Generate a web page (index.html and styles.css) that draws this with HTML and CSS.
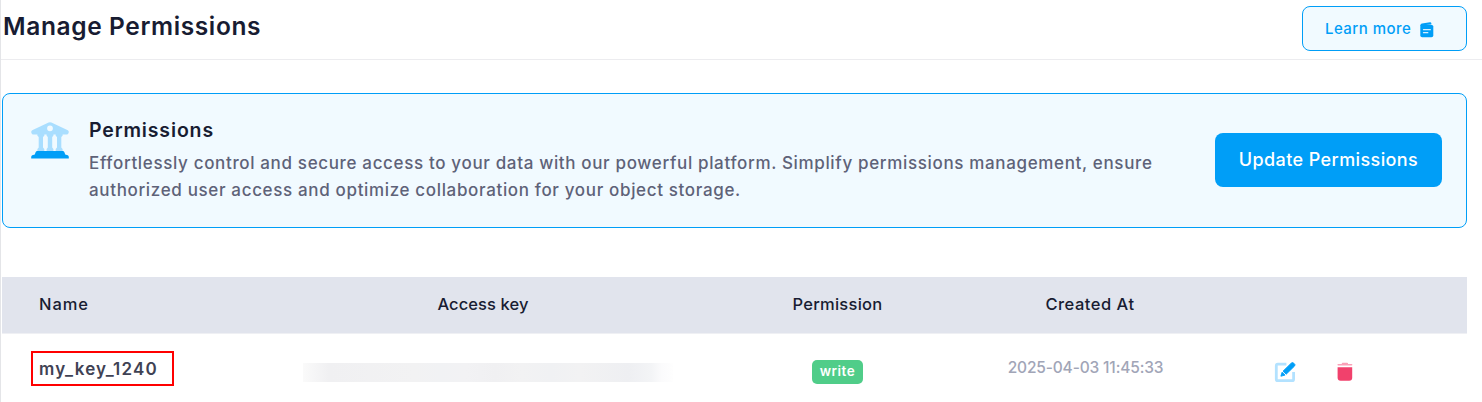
FILE: index.html
```
<!DOCTYPE html>
<html lang="en">
<head>
<meta charset="utf-8">
<title>Manage Permissions</title>
<link rel="stylesheet" href="styles.css">
</head>
<body>
<main class="page">
  <header class="topbar">
    <h1 class="title">Manage Permissions</h1>
    <a class="learn">
      <span>Learn more</span>
      <svg width="14" height="16" viewBox="0 0 14 16">
        <path d="M0.4 3.4 Q0.4 1.6 2 1.4 L10 0.2 Q11.2 0.1 11.4 1.4 V2.6 Z" fill="#009ef7"/>
        <path d="M0.3 3 H11.8 Q13.3 3 13.3 4.5 V13.5 Q13.3 15.3 11.5 15.3 H2.2 Q0.3 15.3 0.3 13.5 Z" fill="#009ef7"/>
        <path d="M3.5 7.7 H10.3 M3.5 10.7 H7.8" stroke="#d5efff" stroke-width="1.3" stroke-linecap="round"/>
      </svg>
    </a>
  </header>

  <section class="notice">
    <svg class="bank" width="38" height="38" viewBox="0 0 38 38">
      <path fill="#a9deff" fill-rule="evenodd" d="M17.6 0.5 Q19 -0.1 20.4 0.5 L36.8 8.2 Q38 8.8 37.7 10.4 Q37.3 12.4 36 12.4 H2 Q0.7 12.4 0.3 10.4 Q0 8.8 1.2 8.2 Z M19 3.4 A2.9 2.9 0 1 0 19 9.2 A2.9 2.9 0 1 0 19 3.4 Z"/>
      <g fill="#a9deff">
        <path d="M6.4 12 H13.3 V13.8 L12 15 V25.6 L13.3 27 V30 H6.4 V27 L7.7 25.6 V15 L6.4 13.8 Z"/>
        <path d="M15.6 12 H22.4 V13.8 L21.2 15 V25.6 L22.4 27 V30 H15.6 V27 L16.8 25.6 V15 L15.6 13.8 Z"/>
        <path d="M24.7 12 H31.6 V13.8 L30.3 15 V25.6 L31.6 27 V30 H24.7 V27 L26 25.6 V15 L24.7 13.8 Z"/>
      </g>
      <path fill="#009ef7" d="M6 29 H32 Q33.2 29 33.5 30.5 L34.2 32.4 L36.8 33.2 Q37.8 33.7 37.8 35 V36.5 H0.2 V35 Q0.2 33.7 1.2 33.2 L3.8 32.4 L4.5 30.5 Q4.8 29 6 29 Z"/>
    </svg>
    <div class="notice-body">
      <h2 class="notice-title">Permissions</h2>
      <p class="notice-text">Effortlessly control and secure access to your data with our powerful platform. Simplify permissions management, ensure<br>authorized user access and optimize collaboration for your object storage.</p>
    </div>
    <button class="update">Update Permissions</button>
  </section>

  <section class="table">
    <div class="row head">
      <span class="h-name">Name</span>
      <span class="mid h-access">Access key</span>
      <span class="mid h-perm">Permission</span>
      <span class="mid h-created">Created At</span>
    </div>
    <div class="row item">
      <span class="key">my_key_1240</span>
      <span class="mid masked-cell"><span class="masked"></span></span>
      <span class="mid"><span class="badge">write</span></span>
      <span class="mid date">2025-04-03 11:45:33</span>
      <span class="actions">
        <svg width="22" height="22" viewBox="0 0 22 22">
          <path d="M12.4 3.2 H3.8 Q2.3 3.2 2.3 4.7 V18.2 Q2.3 19.7 3.8 19.7 H18.1 Q19.6 19.7 19.6 18.2 V11" fill="none" stroke="#b3e2ff" stroke-width="2.8"/>
          <path d="M6.9 15.2 L8.1 11.2 L11 14.1 Z M9 10.2 L17.2 2.2 Q18.4 1 19.8 2.2 Q21.8 3.8 20.6 5 L12.2 13.2 Z" fill="#009ef7" stroke="#009ef7" stroke-width="0.9" stroke-linejoin="round"/>
        </svg>
        <svg width="16" height="20" viewBox="0 0 16 20">
          <path d="M1.2 2 H4.8 V1.6 Q4.8 0.8 5.6 0.8 H10.2 Q11 0.8 11 1.6 V2 H14.6 Q15.4 2 15.4 2.8 Q15.4 3.6 14.6 3.6 H1.2 Q0.4 3.6 0.4 2.8 Q0.4 2 1.2 2 Z" fill="#faa0b7"/>
          <path d="M0.6 5.2 H15.2 V15.8 Q15.2 18.8 12.2 18.8 H3.6 Q0.6 18.8 0.6 15.8 Z" fill="#f1416c"/>
        </svg>
      </span>
    </div>
  </section>
</main>
</body>
</html>
```
FILE: styles.css
```
* { box-sizing: border-box; }
body {
  margin: 0;
  background: #fff;
  font-family: Inter, "Open Sans", sans-serif;
  font-weight: 500;
  color: #181c32;
  overflow: hidden;
}
h1, h2, p { margin: 0; }
svg { display: block; flex: none; }
.page { height: 402px; border-left: 1px solid #e4e5e8; }
.topbar {
  display: flex;
  justify-content: space-between;
  align-items: flex-start;
  height: 60px;
  padding: 6px 15px 0 2px;
  border-bottom: 1px solid #ececef;
}
.title {
  padding-top: 5px;
  font-size: 24.5px;
  line-height: 30px;
  font-weight: 600;
  letter-spacing: 0.62px;
}
.learn {
  display: flex;
  align-items: center;
  gap: 9px;
  width: 165px;
  height: 45px;
  padding-left: 22px;
  border: 1px solid #009ef7;
  border-radius: 8px;
  background: #f1faff;
  color: #009ef7;
  font-size: 15px;
  letter-spacing: 0.45px;
}
.learn svg { margin-top: 2px; }
.notice {
  display: flex;
  width: 1465px;
  height: 135px;
  margin: 33px 0 0 1px;
  padding: 0 24px 0 29px;
  border: 1px solid #009ef7;
  border-radius: 8px;
  background: #f1faff;
}
.bank { margin: 28px 19px 0 -1px; }
.notice-body { flex: 1; padding: 22px 0 0 1px; white-space: nowrap; }
.notice-title { font-size: 19.5px; line-height: 28px; font-weight: 600; letter-spacing: 0.85px; }
.notice-text {
  margin-top: 6px;
  font-size: 17px;
  line-height: 27px;
  letter-spacing: 0.65px;
  color: #5e6278;
}
.update {
  width: 227px;
  height: 54px;
  margin-top: 39px;
  padding: 0 0 2px;
  border: 0;
  border-radius: 8px;
  background: #009ef7;
  color: #fff;
  font: 500 18px Inter, sans-serif;
  letter-spacing: 0.4px;
}
.table { width: 1465px; margin: 49px 0 0 1px; }
.row {
  display: grid;
  grid-template-columns: 264px 434px 275px 230px 1fr;
}
.mid { display: flex; justify-content: center; }
.head {
  height: 57px;
  align-items: center;
  padding-bottom: 3px;
  background: #e1e4ed;
  border-bottom: 1px solid #eff0f4;
  font-size: 16.5px;
}
.h-name { padding-left: 37px; letter-spacing: 0.9px; }
.h-access { letter-spacing: 0.1px; }
.h-perm { letter-spacing: 0.25px; }
.h-created { letter-spacing: 0.5px; }
.item { height: 68px; align-items: start; padding-top: 17px; }
.key {
  width: 143px;
  height: 35px;
  margin-left: 29px;
  padding-left: 6px;
  border: 2.5px solid #f00;
  font-size: 17px;
  line-height: 33px;
  font-weight: 600;
  letter-spacing: 1.15px;
  color: #3f4254;
}
.masked-cell { padding-left: 10px; }
.masked {
  width: 370px;
  height: 19px;
  margin-top: 12px;
  background: linear-gradient(90deg, #fafafa, #f0f0f2 7%, #f2f2f3 30%, #f1f2f4 37%, #f2f2f4 44%, #f0f0f2 52%, #f2f2f3 59%, #f0f1f3 67%, #f2f2f3 75%, #eeeff2 88%, #f3f4f6 94%, #fbfbfc 97%, #fefefe);
}
.badge {
  width: 51px;
  height: 24px;
  margin-top: 9px;
  border-radius: 5px;
  background: #50cd89;
  color: #fff;
  font-size: 13.5px;
  line-height: 23px;
  font-weight: 600;
  letter-spacing: 0.5px;
  text-align: center;
}
.date {
  padding: 7px 9px 0 0;
  font-size: 15.5px;
  line-height: 20px;
  letter-spacing: -0.15px;
  color: #a1a5b7;
}
.actions { display: flex; gap: 41px; padding: 10px 0 0 69px; }
.actions svg + svg { margin-top: 1px; }
```
